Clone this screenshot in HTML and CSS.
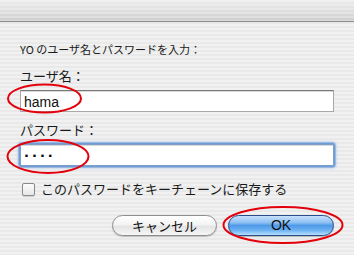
FILE: index.html
```html
<!DOCTYPE html>
<html lang="ja">
<head>
<meta charset="utf-8">
<title>パスワード</title>
<link rel="stylesheet" href="styles.css">
</head>
<body>
<div class="sheet">
  <div class="titlebar"></div>
  <div class="content">
    <p class="prompt">YO のユーザ名とパスワードを入力：</p>
    <label class="label" for="user">ユーザ名：</label>
    <input class="field" id="user" type="text" value="hama" readonly>
    <label class="label label-pw" for="pw">パスワード：</label>
    <div class="focus-ring"><input class="field field-pw" id="pw" type="text" value="····" readonly></div>
    <div class="check-row">
      <span class="checkbox"></span>
      <span class="check-label">このパスワードをキーチェーンに保存する</span>
    </div>
    <div class="buttons">
      <button class="btn btn-cancel">キャンセル</button>
      <button class="btn btn-ok">OK</button>
    </div>
  </div>
  <svg class="marks" width="354" height="255" viewBox="0 0 354 255">
    <ellipse cx="44.5" cy="98.5" rx="36.5" ry="14" />
    <ellipse cx="48" cy="156.5" rx="40.5" ry="16.5" />
    <ellipse cx="283" cy="225" rx="59.5" ry="18" />
  </svg>
</div>
</body>
</html>
```
FILE: styles.css
```css
html, body {
  margin: 0;
  padding: 0;
}
body {
  width: 354px;
  height: 255px;
  overflow: hidden;
  font-family: "Noto Sans CJK JP", "DejaVu Sans", sans-serif;
  color: #1a1a1a;
}
.sheet {
  position: relative;
  width: 354px;
  height: 255px;
  background: repeating-linear-gradient(to bottom, #f1f1f1 0 2px, #e9e9e9 2px 4px);
}
.titlebar {
  height: 21px;
  border-bottom: 1px solid #8c8c8c;
  background:
    repeating-linear-gradient(to bottom, rgba(255,255,255,0.25) 0 2px, rgba(0,0,0,0) 2px 4px),
    linear-gradient(to bottom, #ececec 0%, #e2e2e2 40%, #cfcfcf 100%);
}
.content {
  display: flex;
  flex-direction: column;
  padding: 20px 20px 0 20px;
}
.prompt {
  margin: 0;
  font-size: 11px;
  line-height: 14px;
  height: 14px;
}
.label {
  display: block;
  margin-top: 12px;
  font-size: 13px;
  line-height: 16px;
  height: 16px;
}
.label-pw {
  margin-top: 10px;
}
.field {
  display: block;
  box-sizing: border-box;
  width: 314px;
  height: 22px;
  margin: 6px 0 0 0;
  padding: 1px 3px 0 3px;
  border: 1px solid #a9a9a9;
  border-top-color: #7a7a7a;
  background: #fff;
  font-family: "Liberation Sans", "DejaVu Sans", sans-serif;
  font-size: 14px;
  color: #111;
  outline: none;
  box-shadow: inset 0 1px 0 #d8d8d8;
}
.focus-ring {
  margin-top: 6px;
  width: 314px;
  height: 22px;
  border-radius: 2px;
  box-shadow: 0 0 0 1px #6d9cd6, 0 0 0 2px rgba(120,165,220,0.6), 0 0 2px 3px rgba(140,180,230,0.35);
}
.field-pw {
  margin: 0;
  border-color: #7f9fc8;
  font-family: "DejaVu Sans", sans-serif;
  font-size: 13px;
  font-weight: bold;
  color: #000;
  letter-spacing: 3px;
}
.check-row {
  display: flex;
  align-items: center;
  gap: 6px;
  margin-top: 15px;
  padding-left: 2px;
  height: 16px;
}
.checkbox {
  box-sizing: border-box;
  width: 13px;
  height: 13px;
  border: 1px solid #8a8a8a;
  border-radius: 2px;
  background: linear-gradient(to bottom, #fdfdfd, #e6e6e6);
  box-shadow: 0 1px 1px rgba(0,0,0,0.15);
}
.check-label {
  font-size: 13px;
  line-height: 16px;
}
.buttons {
  display: flex;
  justify-content: flex-end;
  gap: 11px;
  margin-top: 18px;
}
.btn {
  box-sizing: border-box;
  height: 21px;
  border-radius: 11px;
  padding: 0;
  font-family: "Noto Sans CJK JP", "DejaVu Sans", sans-serif;
  font-size: 13px;
  line-height: 19px;
  color: #111;
}
.btn-cancel {
  width: 105px;
  border: 1px solid #8e8e8e;
  background: linear-gradient(to bottom, #ffffff 0%, #f4f4f4 45%, #e4e4e4 55%, #f6f6f6 100%);
  box-shadow: 0 1px 1px rgba(0,0,0,0.2);
}
.btn-ok {
  width: 106px;
  border: 1px solid #2b4c8a;
  font-family: "Liberation Sans", "DejaVu Sans", sans-serif;
  font-size: 14px;
  background: linear-gradient(to bottom, #c9e1fb 0%, #8cc0f3 35%, #4f9ae8 50%, #6cb2f2 75%, #b5e0ff 100%);
  box-shadow: 0 1px 1px rgba(0,0,0,0.25);
}
.marks {
  position: absolute;
  left: 0;
  top: 0;
  pointer-events: none;
}
.marks ellipse {
  fill: none;
  stroke: #e3000b;
  stroke-width: 2;
}
```
